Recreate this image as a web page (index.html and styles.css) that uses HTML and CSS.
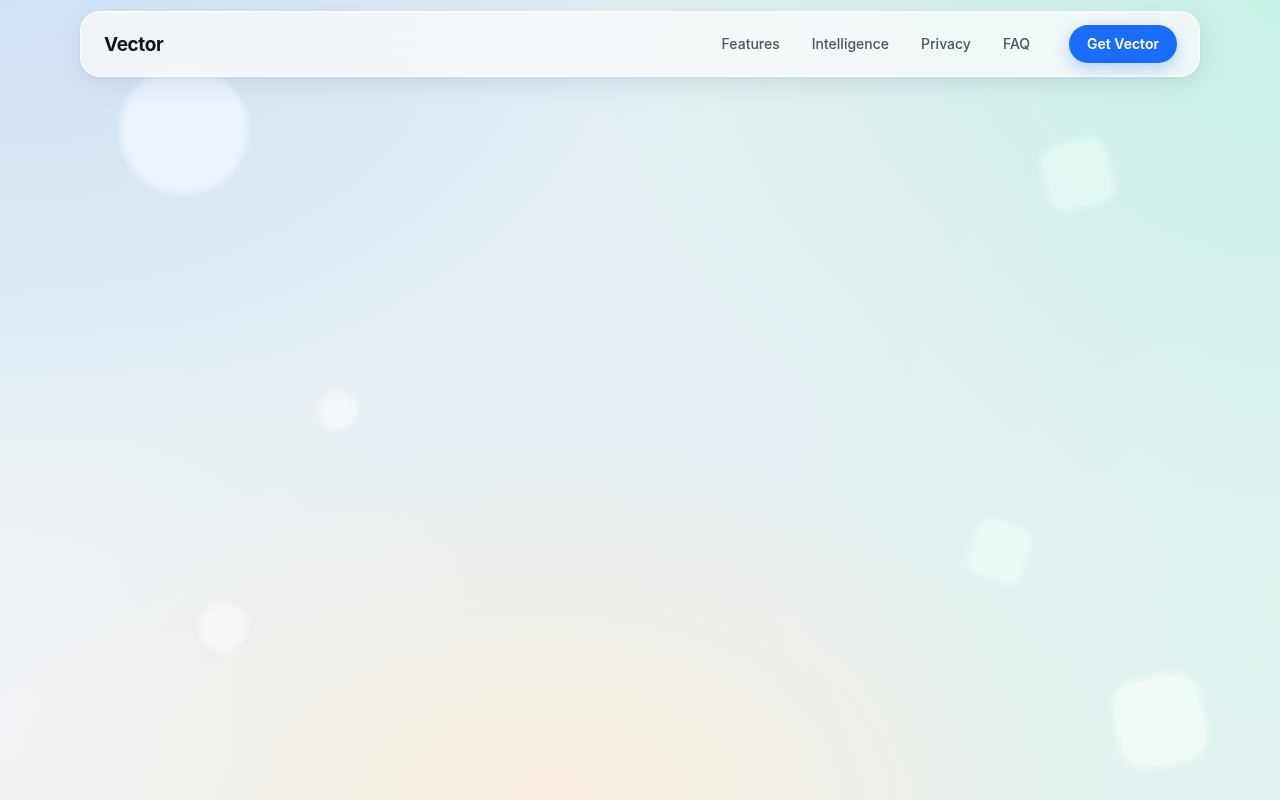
FILE: index.html
```html
<!DOCTYPE html>
<html lang="en">
<head>
  <meta charset="UTF-8">
  <meta name="viewport" content="width=device-width, initial-scale=1">
  <title>Vector</title>
  <link rel="stylesheet" href="styles.css">
</head>
<body>
  <div class="backdrop">
    <div class="shape circle big"></div>
    <div class="shape square sq-top"></div>
    <div class="shape circle small"></div>
    <div class="shape square sq-mid"></div>
    <div class="shape circle tiny"></div>
    <div class="shape square sq-bottom"></div>
  </div>

  <div class="nav-wrap">
    <nav class="nav">
      <a class="logo" href="#">Vector</a>
      <div class="nav-links">
        <a href="#">Features</a>
        <a href="#">Intelligence</a>
        <a href="#">Privacy</a>
        <a href="#">FAQ</a>
        <a class="cta" href="#">Get Vector</a>
      </div>
    </nav>
  </div>
</body>
</html>
```

FILE: styles.css
```css
html, body {
  height: 100%;
}
body {
  margin: 0;
  font-family: Inter, "Noto Sans", sans-serif;
  color: #111418;
  overflow: hidden;
  background-color: #e6eff3;
  background-image:
    radial-gradient(ellipse 700px 450px at 0% 0%, rgba(205, 224, 247, 0.95), rgba(205, 224, 247, 0) 100%),
    radial-gradient(ellipse 700px 560px at 100% 0%, rgba(198, 242, 230, 0.95), rgba(198, 242, 230, 0) 100%),
    radial-gradient(ellipse 600px 360px at 43% 100%, rgba(250, 238, 220, 0.9), rgba(250, 238, 220, 0) 100%),
    radial-gradient(ellipse 520px 520px at 100% 75%, rgba(218, 245, 238, 0.9), rgba(218, 245, 238, 0) 100%),
    radial-gradient(ellipse 520px 420px at 0% 90%, rgba(240, 242, 246, 0.95), rgba(240, 242, 246, 0) 100%);
}
a {
  text-decoration: none;
}

/* floating shapes */
.backdrop {
  position: fixed;
  inset: 0;
  pointer-events: none;
}
.shape {
  position: absolute;
  background: rgba(255, 255, 255, 0.55);
  filter: blur(3px);
}
.circle {
  border-radius: 50%;
}
.square {
  border-radius: 28%;
}
.big {
  left: 120px;
  top: 66px;
  width: 128px;
  height: 128px;
  background: rgba(240, 246, 255, 0.8);
}
.small {
  left: 318px;
  top: 390px;
  width: 40px;
  height: 40px;
  background: rgba(250, 252, 255, 0.65);
}
.tiny {
  left: 199px;
  top: 603px;
  width: 48px;
  height: 48px;
  background: rgba(255, 255, 255, 0.55);
}
.sq-top {
  left: 1044px;
  top: 141px;
  width: 68px;
  height: 68px;
  transform: rotate(-15deg);
  background: rgba(230, 250, 245, 0.75);
}
.sq-mid {
  left: 971px;
  top: 522px;
  width: 58px;
  height: 58px;
  transform: rotate(20deg);
  background: rgba(240, 252, 248, 0.65);
}
.sq-bottom {
  left: 1115px;
  top: 676px;
  width: 90px;
  height: 90px;
  transform: rotate(-10deg);
  background: rgba(244, 252, 249, 0.8);
}

/* navigation */
.nav-wrap {
  position: relative;
  padding: 11px 80px 0;
}
.nav {
  display: flex;
  align-items: center;
  justify-content: space-between;
  height: 66px;
  padding: 0 22px 0 23px;
  border-radius: 20px;
  background: rgba(248, 250, 251, 0.78);
  backdrop-filter: blur(14px);
  box-shadow: 0 6px 22px rgba(140, 160, 185, 0.25), 0 1px 2px rgba(140, 160, 185, 0.15);
  border: 1px solid rgba(255, 255, 255, 0.7);
  box-sizing: border-box;
}
.logo {
  font-size: 19px;
  font-weight: 700;
  color: #11151a;
  letter-spacing: -0.4px;
}
.nav-links {
  display: flex;
  align-items: center;
  gap: 32px;
}
.nav-links a {
  font-size: 14px;
  font-weight: 500;
  color: #50555c;
  line-height: 18px;
}
.nav-links .cta {
  margin-left: 7px;
  padding: 0 18px;
  height: 38px;
  line-height: 38px;
  border-radius: 19px;
  background: #1a6dfb;
  color: #ffffff;
  font-weight: 600;
  box-shadow: 0 6px 16px rgba(26, 109, 251, 0.28);
}
```
